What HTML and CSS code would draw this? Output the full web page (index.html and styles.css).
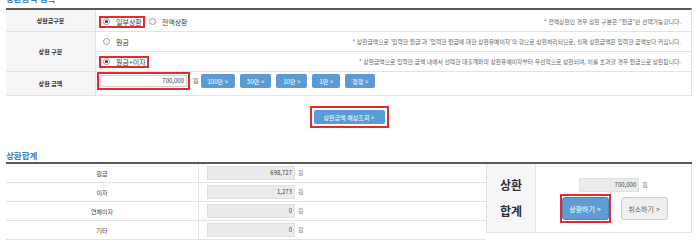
FILE: index.html
```html
<!DOCTYPE html>
<html lang="ko">
<head>
<meta charset="utf-8">
<title>상환</title>
<link rel="stylesheet" href="styles.css">
</head>
<body>
<div class="page">
  <h2 class="sec-title sec-title--cut">상환금액 입력</h2>
  <div class="form-table">
    <div class="th">상환금구분</div>
    <div class="td td--r1">
      <span class="opt hl"><span class="radio on"></span>일부상환</span>
      <span class="opt"><span class="radio"></span>전액상환</span>
      <span class="note">* 전액상환인 경우 상환 구분은 "원금"만 선택가능합니다.</span>
    </div>
    <div class="th th--span">상환 구분</div>
    <div class="td">
      <span class="opt"><span class="radio"></span>원금</span>
      <span class="note">* 상환금액으로 '입력한 원금'과 '입력한 원금에 대한 상환유예이자'의 합으로 상환처리되므로, 실제 상환금액은 입력한 금액보다 커집니다.</span>
    </div>
    <div class="td">
      <span class="opt hl"><span class="radio on"></span>원금+이자</span>
      <span class="note">* 상환금액으로 입력한 금액 내에서 선택한 대출계좌의 상환유예이자부터 우선적으로 상환되며, 이를 초과할 경우 원금으로 상환됩니다.</span>
    </div>
    <div class="th">상환 금액</div>
    <div class="td td--amt">
      <span class="hl-box"><span class="field">700,000</span></span>
      <span class="unit">원</span>
      <span class="btn">100만 &gt;</span>
      <span class="btn">50만 &gt;</span>
      <span class="btn">10만 &gt;</span>
      <span class="btn">1만 &gt;</span>
      <span class="btn">정정 &gt;</span>
    </div>
  </div>

  <div class="calc-wrap">
    <span class="hl-box hl-box--calc"><span class="btn btn--calc">상환금액 예상조회 &gt;</span></span>
  </div>

  <h2 class="sec-title sec-title--sum">상환합계</h2>
  <div class="sum">
    <div class="sum-table">
      <div class="sum-row"><div class="sum-th">원금</div><div class="sum-td"><span class="ro">698,727</span><span class="unit unit--ro">원</span></div></div>
      <div class="sum-row"><div class="sum-th">이자</div><div class="sum-td"><span class="ro">1,273</span><span class="unit unit--ro">원</span></div></div>
      <div class="sum-row"><div class="sum-th">연체이자</div><div class="sum-td"><span class="ro">0</span><span class="unit unit--ro">원</span></div></div>
      <div class="sum-row"><div class="sum-th">기타</div><div class="sum-td"><span class="ro">0</span><span class="unit unit--ro">원</span></div></div>
    </div>
    <div class="sum-total">
      <div class="total-th">상환<br>합계</div>
      <div class="total-td">
        <div class="total-amt"><span class="ro ro--total">700,000</span><span class="unit unit--ro">원</span></div>
        <div class="total-btns">
          <span class="hl-box hl-box--btn"><span class="btn-lg btn-lg--blue">상환하기 &gt;</span></span>
          <span class="btn-lg btn-lg--grey">취소하기 &gt;</span>
        </div>
      </div>
    </div>
  </div>
</div>
</body>
</html>
```

FILE: styles.css
```css
* { box-sizing: border-box; }
html, body { margin: 0; padding: 0; background: #fff; }
body {
  font-family: "Noto Sans CJK KR", "Noto Sans", sans-serif;
  color: #333;
}
.page { padding: 0 6px; }

.sec-title {
  margin: 0;
  font-size: 8.5px;
  line-height: 12px;
  font-weight: bold;
  color: #3d7fc4;
}
.sec-title--cut { margin: -8px 0 4px; }
.sec-title--sum { margin: 21px 0 1px; }

/* top form table */
.form-table {
  display: grid;
  grid-template-columns: 90px 1fr;
  grid-template-rows: 22px 20px 20px 24px;
  border-top: 2px solid #5a5a5a;
  border-right: 1px solid #e3e3e3;
}
.th {
  background: #f6f6f8;
  border-right: 1px solid #e3e3e3;
  border-bottom: 1px solid #e3e3e3;
  display: flex;
  align-items: center;
  justify-content: center;
  font-size: 6px;
  font-weight: bold;
  color: #333;
}
.th--span { grid-row: span 2; }
.td {
  border-bottom: 1px solid #e3e3e3;
  display: flex;
  align-items: center;
  padding-left: 3px;
  min-width: 0;
}
.td--r1 { padding-top: 2px; }
.opt {
  display: inline-flex;
  align-items: center;
  height: 12px;
  border: 2px solid transparent;
  padding: 0 1px 0 2px;
  font-size: 7px;
  line-height: 8px;
  color: #444;
  white-space: nowrap;
}
.opt.hl { border-color: #e52a2f; }
.radio {
  position: relative;
  width: 7px;
  height: 7px;
  border: 1px solid #999;
  border-radius: 50%;
  background: #fff;
  margin-right: 6px;
  flex: none;
}
.radio.on::after {
  content: "";
  position: absolute;
  left: 1px;
  top: 1px;
  width: 3px;
  height: 3px;
  border-radius: 50%;
  background: #333;
}
.note {
  margin-left: auto;
  padding-right: 10px;
  font-size: 5.8px;
  line-height: 8px;
  color: #666;
  white-space: nowrap;
}
.td--amt {
  padding-left: 1px;
  padding-bottom: 5px;
}
.hl-box {
  display: inline-flex;
  border: 2px solid #e52a2f;
  padding: 1px;
}
.field {
  display: block;
  width: 87px;
  height: 12px;
  border: 1px solid #d5d5d5;
  background: #fff;
  text-align: right;
  padding-right: 2px;
  font-size: 6px;
  line-height: 10px;
  color: #333;
}
.unit {
  font-size: 6px;
  line-height: 8px;
  color: #666;
  margin: 0 2px 0 3px;
}
.btn {
  display: inline-flex;
  align-items: center;
  height: 14px;
  padding: 0 7px;
  margin-right: 5px;
  border-radius: 2px;
  background: #5b9bd5;
  color: #fff;
  font-size: 6px;
  white-space: nowrap;
}

.calc-wrap {
  display: flex;
  justify-content: center;
  margin-top: 10px;
}
.hl-box--calc { padding: 2px; }
.btn--calc {
  margin: 0;
  padding: 0 8px;
  width: 71px;
  justify-content: center;
}

/* summary */
.sum {
  display: flex;
  align-items: flex-start;
  border-top: 2px solid #5a5a5a;
}
.sum-table { width: 480px; flex: none; }
.sum-row {
  display: grid;
  grid-template-columns: 193px 1fr;
  height: 19px;
  border-bottom: 1px solid #e3e3e3;
}
.sum-th {
  border-right: 1px solid #e3e3e3;
  display: flex;
  align-items: center;
  justify-content: center;
  font-size: 6px;
  color: #444;
}
.sum-td {
  display: flex;
  align-items: center;
  padding-left: 8px;
}
.ro {
  display: block;
  width: 88px;
  height: 14px;
  background: #ebebeb;
  border: 1px solid #e0e0e0;
  text-align: right;
  padding-right: 2px;
  font-size: 6px;
  line-height: 12px;
  color: #444;
}
.unit--ro { color: #888; margin: 0 0 0 3px; }
.sum-total {
  flex: 1;
  display: flex;
  height: 69px;
  border-bottom: 1px solid #e3e3e3;
  border-right: 1px solid #e3e3e3;
}
.total-th {
  width: 50px;
  flex: none;
  background: #f7f7f9;
  border-left: 1px solid #e3e3e3;
  border-right: 1px solid #e3e3e3;
  display: flex;
  align-items: center;
  justify-content: center;
  text-align: center;
  font-size: 12px;
  line-height: 26px;
  font-weight: bold;
  color: #333;
}
.total-td {
  flex: 1;
  display: flex;
  flex-direction: column;
  align-items: center;
  padding-top: 14px;
}
.total-amt { display: flex; align-items: center; }
.ro--total { width: 60px; }
.total-btns {
  display: flex;
  align-items: center;
  margin-top: 2px;
}
.hl-box--btn { padding: 1px 0; margin-right: 10px; }
.btn-lg {
  display: inline-flex;
  align-items: center;
  justify-content: center;
  width: 47px;
  height: 23px;
  border-radius: 3px;
  font-size: 7px;
  white-space: nowrap;
}
.btn-lg--blue {
  background: #5e9dd3;
  border: 1px solid #4b89c2;
  color: #fff;
}
.btn-lg--grey {
  background: #efefef;
  border: 1px solid #cfcfcf;
  color: #666;
}
```
